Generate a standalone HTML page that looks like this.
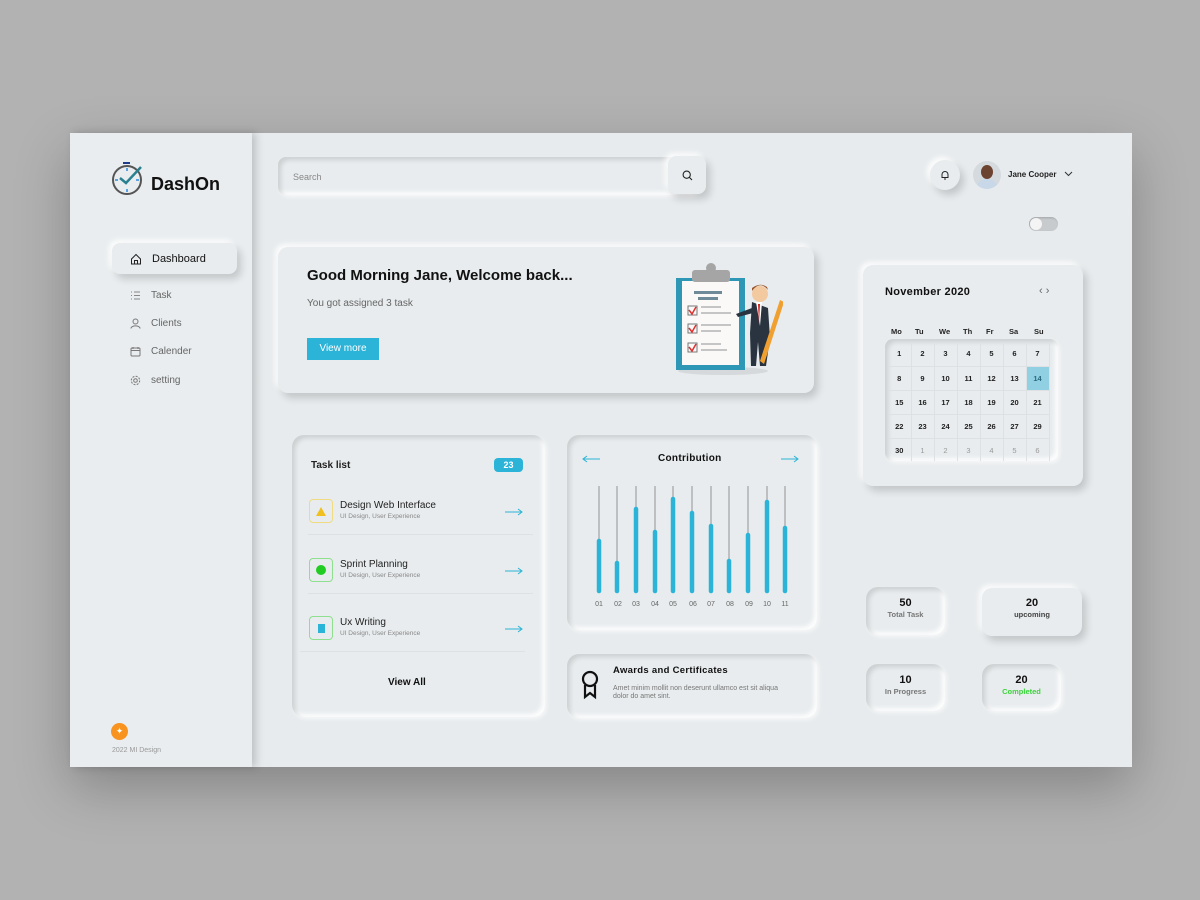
<!DOCTYPE html>
<html><head><meta charset="utf-8"><style>
*{box-sizing:border-box;margin:0;padding:0}
body{width:1200px;height:900px;background:#b2b2b2;font-family:"Liberation Sans",sans-serif;position:relative;overflow:hidden}
.a{position:absolute}
#frame{left:70px;top:133px;width:1062px;height:634px;background:#e7ebed;box-shadow:0 20px 50px rgba(0,0,0,.25)}
#side{left:70px;top:133px;width:182px;height:634px;background:#e9edef;box-shadow:4px 0 8px rgba(0,0,0,.18)}
.out{background:#e8ecee;border-radius:10px;box-shadow:4px 5px 8px rgba(0,0,0,.16),-3px -3px 6px rgba(255,255,255,.9)}
.in{background:#e8ecee;border-radius:12px;box-shadow:inset 3px 3px 5px rgba(0,0,0,.12),inset -3px -3px 5px rgba(255,255,255,.9),2px 2px 4px rgba(255,255,255,.6)}
.nav{left:130px;font-size:10px;color:#666;display:flex;align-items:center;gap:10px}
.b{font-weight:bold}
.task{left:308px;width:225px;height:43px;border-bottom:1px solid #dde1e3}
.ic{position:absolute;left:1px;top:7px;width:24px;height:24px;border-radius:4px;border:1.5px solid #f0dc80;display:flex;align-items:center;justify-content:center}
.tt{position:absolute;left:32px;top:8px;font-size:10px;color:#222}
.ts{position:absolute;left:32px;top:21px;font-size:6.5px;color:#888}
.arr{position:absolute;right:10px;top:16px}
.cal td{width:23px;height:24px;text-align:center;font-size:7.5px;font-weight:bold;color:#222;border-right:1px solid #dde1e3;border-bottom:1px solid #dde1e3}
.st{text-align:center;font-weight:bold}
.st .n{font-size:11px;color:#111;margin-top:10px}
.st .l{font-size:7.5px;color:#777;margin-top:1px}
</style></head><body>
<div id="frame" class="a"></div>
<div id="side" class="a"></div>

<svg class="a" style="left:110px;top:161px" width="36" height="36" viewBox="0 0 36 36">
<rect x="13" y="1" width="7" height="2" fill="#1c3d8a"/>
<circle cx="17" cy="19" r="14" fill="none" stroke="#555" stroke-width="2"/>
<g stroke="#2a8be0" stroke-width="1.5"><line x1="17" y1="7" x2="17" y2="10"/><line x1="17" y1="28" x2="17" y2="31"/><line x1="5" y1="19" x2="8" y2="19"/><line x1="26" y1="19" x2="29" y2="19"/></g>
<path d="M10 17 L16 22 L31 6" fill="none" stroke="#2a8090" stroke-width="2.5"/>
</svg>
<div class="a b" style="left:151px;top:174px;font-size:18px;color:#111">DashOn</div>

<div class="a out" style="left:112px;top:243px;width:125px;height:31px;border-radius:8px"></div>
<div class="a nav" style="top:253px;color:#111;font-size:11px">
<svg width="12" height="12" viewBox="0 0 12 12"><path d="M1.5 6 L6 1.5 L10.5 6 V11 H1.5Z M4.5 11 V7.5 H7.5 V11" fill="none" stroke="#222" stroke-width="1"/></svg>Dashboard</div>
<div class="a nav" style="top:290px"><svg width="11" height="11" viewBox="0 0 11 11" stroke="#888" fill="none"><path d="M4 2H10M4 5.5H10M4 9H10M1 2H2M1 5.5H2M1 9H2"/></svg>Task</div>
<div class="a nav" style="top:318px"><svg width="11" height="11" viewBox="0 0 11 11" stroke="#777" fill="none"><circle cx="5.5" cy="3.5" r="2.5"/><path d="M1 10.5 C1 7 10 7 10 10.5"/></svg>Clients</div>
<div class="a nav" style="top:346px"><svg width="11" height="11" viewBox="0 0 11 11" stroke="#777" fill="none"><rect x="1" y="2" width="9" height="8" rx="1"/><path d="M3 1V3M8 1V3M1 4.5H10"/></svg>Calender</div>
<div class="a nav" style="top:375px"><svg width="11" height="11" viewBox="0 0 11 11" stroke="#777" fill="none"><circle cx="5.5" cy="5.5" r="1.8"/><circle cx="5.5" cy="5.5" r="4.2" stroke-dasharray="2 1.3"/></svg>setting</div>

<div class="a" style="left:111px;top:723px;width:17px;height:17px;border-radius:50%;background:#f7931e;color:#fff;font-size:9px;text-align:center;line-height:17px">✦</div>
<div class="a" style="left:112px;top:747px;font-size:7px;color:#999">2022 MI Design</div>

<div class="a in" style="left:278px;top:157px;width:420px;height:38px;border-radius:8px"></div>
<div class="a" style="left:293px;top:172px;font-size:9px;color:#888">Search</div>
<div class="a out" style="left:668px;top:156px;width:38px;height:38px;border-radius:8px"></div>
<svg class="a" style="left:682px;top:170px" width="11" height="11" viewBox="0 0 11 11" fill="none" stroke="#222" stroke-width="1.1"><circle cx="4.7" cy="4.7" r="3.6"/><path d="M7.4 7.4 L10 10"/></svg>

<div class="a out" style="left:930px;top:160px;width:30px;height:30px;border-radius:50%"></div>
<svg class="a" style="left:940px;top:170px" width="10" height="10" viewBox="0 0 10 10" fill="none" stroke="#222"><path d="M2 7.5 V4.5 A3 3 0 0 1 8 4.5 V7.5 H2 Z M4 9 H6"/></svg>
<div class="a" style="left:973px;top:161px;width:28px;height:28px;border-radius:50%;background:#d5dade;overflow:hidden">
<div class="a" style="left:8px;top:4px;width:12px;height:14px;border-radius:50%;background:#6b4330"></div>
<div class="a" style="left:4px;top:18px;width:20px;height:14px;border-radius:50%;background:#c8d8e8"></div></div>
<div class="a b" style="left:1008px;top:170px;font-size:8px;color:#222">Jane Cooper</div>
<svg class="a" style="left:1064px;top:171px" width="9" height="6" viewBox="0 0 9 6" fill="none" stroke="#333"><path d="M1 1 L4.5 4.5 L8 1"/></svg>

<div class="a" style="left:1029px;top:217px;width:29px;height:14px;border-radius:7px;background:#c8cbcd;box-shadow:inset 1px 1px 2px rgba(0,0,0,.2)"></div>
<div class="a" style="left:1030px;top:218px;width:12px;height:12px;border-radius:50%;background:#f4f4f4"></div>

<div class="a out" style="left:278px;top:247px;width:536px;height:146px"></div>
<div class="a b" style="left:307px;top:267px;font-size:15px;color:#111">Good Morning Jane, Welcome back...</div>
<div class="a" style="left:307px;top:298px;font-size:10px;color:#666">You got assigned 3 task</div>
<div class="a" style="left:307px;top:338px;width:72px;height:22px;background:#2bb3d8;color:#fff;font-size:10px;text-align:center;line-height:22px">View more</div>
<svg class="a" style="left:668px;top:258px" width="115" height="120" viewBox="0 0 115 120">
<ellipse cx="55" cy="113" rx="45" ry="4" fill="#d6d9db"/>
<rect x="8" y="20" width="69" height="92" fill="#2d97b5"/>
<rect x="14" y="23" width="57" height="84" fill="#fbf9f8"/>
<rect x="24" y="12" width="38" height="12" rx="3" fill="#a5a5a5"/><circle cx="43" cy="10" r="5" fill="#a5a5a5"/>
<rect x="26" y="33" width="28" height="3" fill="#6f8a98"/><rect x="30" y="39" width="20" height="3" fill="#6f8a98"/>
<g fill="none" stroke="#777"><rect x="20" y="48" width="9" height="9"/><rect x="20" y="66" width="9" height="9"/><rect x="20" y="85" width="9" height="9"/></g>
<g stroke="#e03030" stroke-width="1.5" fill="none"><path d="M21 52 L24 56 L28 49"/><path d="M21 70 L24 74 L28 67"/><path d="M21 89 L24 93 L28 86"/></g>
<g fill="#c5c5c5"><rect x="33" y="48" width="20" height="2"/><rect x="33" y="54" width="30" height="2"/><rect x="33" y="66" width="30" height="2"/><rect x="33" y="72" width="20" height="2"/><rect x="33" y="85" width="20" height="2"/><rect x="33" y="91" width="26" height="2"/></g>
<path d="M84 44 L100 50 L102 80 L98 108 L92 108 L90 84 L88 108 L83 108 L82 75 Z" fill="#2a3440"/>
<path d="M88 44 L94 44 L92 68 Z" fill="#fff"/><path d="M90 46 L92 46 L91 66 Z" fill="#d02020"/>
<path d="M84 50 L68 56 L70 59 L85 55Z" fill="#2a3440"/>
<circle cx="92" cy="36" r="8" fill="#f3c9a0"/><path d="M84 33 Q92 22 100 32 L99 29 Q92 24 84 30Z" fill="#9a5528"/>
<path d="M112 42 L116 44 L96 106 L92 103 Z" fill="#f0a030"/>
</svg>

<div class="a out" style="left:863px;top:265px;width:220px;height:221px"></div>
<div class="a b" style="left:885px;top:286px;font-size:11px;color:#111;letter-spacing:.3px">November 2020</div>
<div class="a" style="left:1039px;top:285px;font-size:11px;color:#666">‹ ›</div>
<div class="a b" style="left:888px;top:327px;width:170px;font-size:7.5px;color:#222">
<span class="a" style="left:3px">Mo</span><span class="a" style="left:27px">Tu</span><span class="a" style="left:51px">We</span><span class="a" style="left:75px">Th</span><span class="a" style="left:98px">Fr</span><span class="a" style="left:121px">Sa</span><span class="a" style="left:146px">Su</span></div>
<div class="a in" style="left:885px;top:339px;width:173px;height:122px;border-radius:8px;overflow:hidden">
<table class="cal" style="border-collapse:collapse;margin-left:3px;margin-top:3px">
<tr><td>1</td><td>2</td><td>3</td><td>4</td><td>5</td><td>6</td><td>7</td></tr>
<tr><td>8</td><td>9</td><td>10</td><td>11</td><td>12</td><td>13</td><td style="background:#90d0e2;color:#2a6a80">14</td></tr>
<tr><td>15</td><td>16</td><td>17</td><td>18</td><td>19</td><td>20</td><td>21</td></tr>
<tr><td>22</td><td>23</td><td>24</td><td>25</td><td>26</td><td>27</td><td>29</td></tr>
<tr><td>30</td><td style="color:#999;font-weight:normal">1</td><td style="color:#999;font-weight:normal">2</td><td style="color:#999;font-weight:normal">3</td><td style="color:#999;font-weight:normal">4</td><td style="color:#999;font-weight:normal">5</td><td style="color:#999;font-weight:normal">6</td></tr>
</table></div>

<div class="a in" style="left:292px;top:435px;width:253px;height:282px"></div>
<div class="a b" style="left:311px;top:460px;font-size:10px;color:#222">Task list</div>
<div class="a b" style="left:494px;top:458px;width:29px;height:14px;border-radius:4px;background:#2bb3d8;color:#fff;font-size:9px;text-align:center;line-height:14px">23</div>
<div class="a task" style="top:492px"><div class="ic"><div style="width:0;height:0;border-left:5px solid transparent;border-right:5px solid transparent;border-bottom:9px solid #f0c020"></div></div><div class="tt">Design Web Interface</div><div class="ts">UI Design, User Experience</div><svg class="arr" width="18" height="8" viewBox="0 0 18 8" fill="none" stroke="#2bb3d8"><path d="M0 4H17M13 1L17 4L13 7"/></svg></div>
<div class="a task" style="top:551px"><div class="ic" style="border-color:#8ee08e"><div style="width:10px;height:10px;border-radius:50%;background:#22cc22"></div></div><div class="tt">Sprint Planning</div><div class="ts">UI Design, User Experience</div><svg class="arr" width="18" height="8" viewBox="0 0 18 8" fill="none" stroke="#2bb3d8"><path d="M0 4H17M13 1L17 4L13 7"/></svg></div>
<div class="a task" style="top:609px;left:300px;width:225px"><div class="ic" style="left:9px;border-color:#8ee08e"><div style="width:7px;height:9px;background:#2bb3d8"></div></div><div class="tt" style="left:40px">Ux Writing</div><div class="ts" style="left:40px">UI Design, User Experience</div><svg class="arr" width="18" height="8" viewBox="0 0 18 8" fill="none" stroke="#2bb3d8" style="right:2px"><path d="M0 4H17M13 1L17 4L13 7"/></svg></div>
<div class="a b" style="left:388px;top:677px;font-size:10px;color:#111">View All</div>

<div class="a in" style="left:567px;top:435px;width:250px;height:195px"></div>
<svg class="a" style="left:582px;top:455px" width="18" height="8" viewBox="0 0 18 8" fill="none" stroke="#2bb3d8"><path d="M18 4H1M5 1L1 4L5 7"/></svg>
<svg class="a" style="left:781px;top:455px" width="18" height="8" viewBox="0 0 18 8" fill="none" stroke="#2bb3d8"><path d="M0 4H17M13 1L17 4L13 7"/></svg>
<div class="a b" style="left:658px;top:453px;font-size:10px;color:#111;letter-spacing:.3px">Contribution</div>
<svg class="a" style="left:567px;top:480px" width="250" height="135" viewBox="0 0 250 135" font-family="Liberation Sans" font-size="7" fill="#666">
<g stroke="#b0b0b0" stroke-width="1.5">
<line x1="32" y1="6" x2="32" y2="112"/><line x1="50" y1="6" x2="50" y2="112"/><line x1="69" y1="6" x2="69" y2="112"/><line x1="88" y1="6" x2="88" y2="112"/><line x1="106" y1="6" x2="106" y2="112"/><line x1="125" y1="6" x2="125" y2="112"/><line x1="144" y1="6" x2="144" y2="112"/><line x1="162" y1="6" x2="162" y2="112"/><line x1="181" y1="6" x2="181" y2="112"/><line x1="200" y1="6" x2="200" y2="112"/><line x1="218" y1="6" x2="218" y2="112"/></g>
<g stroke="#2bb3d8" stroke-width="4.5" stroke-linecap="round">
<line x1="32" y1="61" x2="32" y2="111"/><line x1="50" y1="83" x2="50" y2="111"/><line x1="69" y1="29" x2="69" y2="111"/><line x1="88" y1="52" x2="88" y2="111"/><line x1="106" y1="19" x2="106" y2="111"/><line x1="125" y1="33" x2="125" y2="111"/><line x1="144" y1="46" x2="144" y2="111"/><line x1="162" y1="81" x2="162" y2="111"/><line x1="181" y1="55" x2="181" y2="111"/><line x1="200" y1="22" x2="200" y2="111"/><line x1="218" y1="48" x2="218" y2="111"/></g>
<g text-anchor="middle"><text x="32" y="126">01</text><text x="51" y="126">02</text><text x="69" y="126">03</text><text x="88" y="126">04</text><text x="106" y="126">05</text><text x="126" y="126">06</text><text x="144" y="126">07</text><text x="163" y="126">08</text><text x="182" y="126">09</text><text x="200" y="126">10</text><text x="218" y="126">11</text></g>
</svg>

<div class="a in" style="left:567px;top:654px;width:250px;height:64px"></div>
<svg class="a" style="left:580px;top:670px" width="20" height="30" viewBox="0 0 20 30" fill="none" stroke="#111" stroke-width="2.2"><circle cx="10" cy="9" r="7"/><path d="M5 15 V27 L10 23 L15 27 V15"/></svg>
<div class="a b" style="left:613px;top:665px;font-size:9.5px;color:#111;letter-spacing:.3px">Awards and Certificates</div>
<div class="a" style="left:613px;top:685px;font-size:7px;color:#777;line-height:8px;width:180px">Amet minim mollit non deserunt ullamco est sit aliqua dolor do amet sint.</div>

<div class="a in st" style="left:866px;top:587px;width:79px;height:48px"><div class="n">50</div><div class="l">Total Task</div></div>
<div class="a out st" style="left:982px;top:588px;width:100px;height:48px"><div class="n" style="margin-top:9px">20</div><div class="l" style="color:#444">upcoming</div></div>
<div class="a in st" style="left:866px;top:664px;width:79px;height:47px"><div class="n">10</div><div class="l">In Progress</div></div>
<div class="a in st" style="left:982px;top:664px;width:79px;height:47px"><div class="n">20</div><div class="l" style="color:#3ad43a">Completed</div></div>
</body></html>
